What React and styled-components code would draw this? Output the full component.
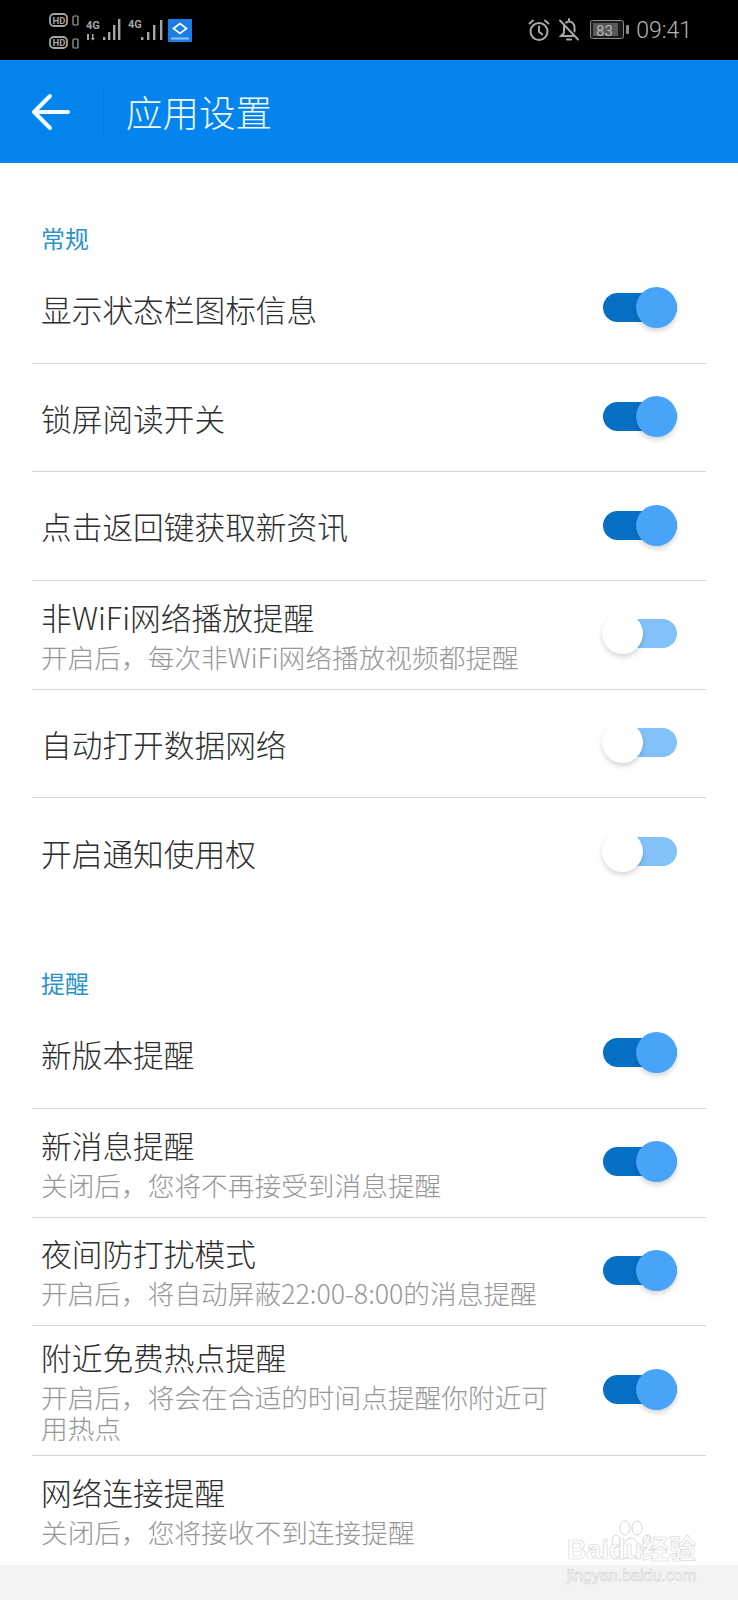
import React from "react";
import styled, { createGlobalStyle } from "styled-components";

const GlobalStyle = createGlobalStyle`
  html, body {
    margin: 0;
    padding: 0;
    background: #f3f3f3;
  }
  body {
    font-family: "Noto Sans CJK SC", "Noto Sans", sans-serif;
  }
`;

const Page = styled.div`
  position: relative;
  width: 738px;
  height: 1600px;
  overflow: hidden;
  background: #f3f3f3;
`;

const StatusBar = styled.div`
  height: 60px;
  background: #000;
  display: flex;
  align-items: center;
  justify-content: space-between;
  padding: 0 46px 0 49px;
  box-sizing: border-box;
  color: #a9a9a9;
`;

const StatusGroup = styled.div`
  display: flex;
  align-items: center;
`;

const Clock = styled.span`
  font-family: "Roboto", sans-serif;
  font-size: 23px;
  font-weight: 300;
  color: #b4b4b4;
  margin-left: 4px;
`;

const AppBar = styled.div`
  height: 103px;
  background: #0484ee;
  display: flex;
  align-items: center;
  padding-left: 31px;
  box-sizing: border-box;
`;

const BackButton = styled.button`
  display: flex;
  padding: 0;
  border: 0;
  background: none;
`;

const AppBarDivider = styled.div`
  width: 1px;
  height: 44px;
  background: #0b75ce;
  margin: 0 22px 0 32px;
`;

const AppBarTitle = styled.h1`
  margin: 0;
  font-size: 36.5px;
  font-weight: 300;
  color: #f2faff;
`;

const Content = styled.div`
  background: #fff;
  height: 1402px;
  overflow: hidden;
`;

const Section = styled.section`
  padding-top: ${(p) => p.$top}px;
`;

const SectionLabel = styled.div`
  font-size: 24px;
  line-height: 30px;
  color: #2b93c9;
  padding-left: 41px;
  margin-bottom: ${(p) => p.$gap}px;
`;

const Row = styled.div`
  height: ${(p) => p.$height || 108.7}px;
  margin: 0 32px;
  padding: 0 29px 2px 9px;
  display: flex;
  align-items: center;
  justify-content: space-between;
  box-sizing: border-box;
  border-bottom: ${(p) => (p.$last ? "none" : "1px solid #d6d6d6")};
`;

const RowText = styled.div`
  width: 510px;
  margin-top: 2px;
  display: flex;
  flex-direction: column;
`;

const RowTitle = styled.div`
  font-size: 30.7px;
  line-height: 38px;
  color: #2e2e2e;
  font-weight: 300;
`;

const RowHint = styled.div`
  font-size: 26.7px;
  line-height: 31px;
  margin-top: 5px;
  color: #979797;
  font-weight: 300;
`;

const Toggle = styled.div`
  position: relative;
  flex: none;
  width: 74px;
  height: 29px;
  border-radius: 15px;
  background: ${(p) => (p.$on ? "#0670c4" : "#82c2f8")};
`;

const Knob = styled.span`
  position: absolute;
  top: -6px;
  ${(p) => (p.$on ? "right: 0;" : "left: -1px;")}
  width: 41px;
  height: 41px;
  border-radius: 50%;
  background: ${(p) => (p.$on ? "#48a4f8" : "#fff")};
  box-shadow: 0 3px 5px rgba(0, 0, 0, 0.16);
`;

const Footer = styled.div`
  height: 35px;
  background: #f3f3f3;
`;

const Watermark = styled.div`
  position: absolute;
  left: 567px;
  top: 1536px;
  width: 132px;
  color: #fff;
  -webkit-text-stroke: 0.6px #d2d2d2;
`;

const WatermarkBrand = styled.div`
  position: relative;
  z-index: 1;
  font-family: "Liberation Sans", "Noto Sans CJK SC", sans-serif;
  font-size: 27px;
  font-weight: 700;
  line-height: 28px;
  white-space: nowrap;
`;

const WatermarkUrl = styled.div`
  font-family: "Liberation Sans", sans-serif;
  font-size: 16px;
  line-height: 18px;
  margin-top: 3px;
  white-space: nowrap;
`;

const PawMark = styled.svg`
  position: absolute;
  left: 44px;
  top: -16px;
`;

const general = [
  { title: "显示状态栏图标信息", on: true },
  { title: "锁屏阅读开关", on: true },
  { title: "点击返回键获取新资讯", on: true },
  { title: "非WiFi网络播放提醒", hint: "开启后，每次非WiFi网络播放视频都提醒", on: false },
  { title: "自动打开数据网络", on: false },
  { title: "开启通知使用权", on: false, last: true },
];

const alerts = [
  { title: "新版本提醒", on: true },
  { title: "新消息提醒", hint: "关闭后，您将不再接受到消息提醒", on: true },
  { title: "夜间防打扰模式", hint: "开启后，将自动屏蔽22:00-8:00的消息提醒", on: true },
  { title: "附近免费热点提醒", hint: "开启后，将会在合适的时间点提醒你附近可用热点", on: true, height: 129.6 },
  { title: "网络连接提醒", hint: "关闭后，您将接收不到连接提醒", on: null, last: true },
];

const SignalIcons = () => (
  <svg width="146" height="40" viewBox="0 0 146 40" fill="none">
    <g stroke="#a5a5a5" strokeWidth="1.8">
      <rect x="1" y="4" width="17" height="12" rx="4" />
      <rect x="1" y="27" width="17" height="11" rx="4" />
      <rect x="24" y="6" width="5" height="9" rx="1" strokeWidth="1.2" />
      <rect x="24" y="29" width="5" height="9" rx="1" strokeWidth="1.2" />
    </g>
    <g fill="#a5a5a5" fontFamily="Roboto, sans-serif" fontWeight="700">
      <text x="3.5" y="13.5" fontSize="9.5">HD</text>
      <text x="3.5" y="36" fontSize="9.5">HD</text>
      <text x="37" y="19" fontSize="11">4G</text>
      <text x="79" y="18" fontSize="11">4G</text>
    </g>
    <g fill="#a5a5a5">
      <path d="M38 24h2v6h-2zM43 24h1.500v4h1.500l-2.200 2.500-2.200-2.500h1.400z" />
      <path d="M54 27h2.400v3H54zM59 22h2.400v8H59zM64 15h2.400v15H64zM69 9h2.400v21H69z" />
      <path d="M92 27h2.400v3H92zM98 22h2.400v8H98zM104 15h2.400v15H104zM111 10h2.400v20H111z" />
    </g>
    <rect x="119" y="9" width="24" height="23" rx="1" fill="#1a7ee6" />
    <path d="M124.500 18.500l6.500-5 6.500 5-6.500 5z" fill="none" stroke="#fff" strokeWidth="1.7" />
    <rect x="122" y="27.500" width="18" height="2" fill="#8ec4f5" />
  </svg>
);

const AlarmIcon = () => (
  <svg width="24" height="24" viewBox="0 0 24 24" fill="none" stroke="#a8a8a8" strokeWidth="2" strokeLinecap="round">
    <circle cx="12" cy="13.5" r="8.5" />
    <path d="M12 8.500v5.200l3.200 2.600M2.500 5.500L6 2.500M21.500 5.500L18 2.500" />
  </svg>
);

const MuteIcon = () => (
  <svg width="24" height="24" viewBox="0 0 24 24" fill="none" stroke="#a8a8a8" strokeWidth="2" strokeLinecap="round" style={{ marginLeft: 6 }}>
    <path d="M7 8.500V15l-3 3h12M9 4.700C10 4 11 3.400 12 3.400c3 0 5.500 2.600 5.500 6v4.200M12 1v2M10 21.500h4M3 2.500l18 19" />
  </svg>
);

const BatteryIcon = () => (
  <svg width="42" height="20" viewBox="0 0 42 20" style={{ marginLeft: 9 }}>
    <rect x="0.5" y="0.5" width="33" height="18" rx="2" fill="#1b1b1b" stroke="#8d8d8d" />
    <rect x="3" y="3" width="25" height="13" fill="#585858" />
    <text x="6" y="15.500" fontSize="15" fontFamily="Roboto, sans-serif" fill="#b5b5b5">83</text>
    <rect x="36" y="5" width="3" height="9" rx="1" fill="#8d8d8d" />
  </svg>
);

const BackArrow = () => (
  <svg width="40" height="40" viewBox="0 0 40 40" fill="none" stroke="#f4fbff" strokeWidth="4" strokeLinecap="round" strokeLinejoin="round">
    <path d="M3 20h34M19 4L3 20l16 16" />
  </svg>
);

const Paw = () => (
  <PawMark width="40" height="44" viewBox="0 0 40 44" fill="#fff" stroke="#d6d6d6" strokeWidth="1">
    <ellipse cx="5" cy="21" rx="4" ry="6" />
    <ellipse cx="14" cy="8" rx="5" ry="7" />
    <ellipse cx="26" cy="8" rx="5" ry="7" />
    <ellipse cx="36" cy="21" rx="4" ry="6" />
    <path d="M20 18c-5 0-6 6-10 9-4 4-1 11 4 11 3 0 4-1 6-1s3 1 6 1c5 0 8-7 4-11-4-3-5-9-10-9z" />
  </PawMark>
);

const SettingRow = ({ item }) => (
  <Row $last={item.last} $height={item.height}>
    <RowText>
      <RowTitle>{item.title}</RowTitle>
      {item.hint && <RowHint>{item.hint}</RowHint>}
    </RowText>
    {item.on !== null && (
      <Toggle $on={item.on}>
        <Knob $on={item.on} />
      </Toggle>
    )}
  </Row>
);

export default function App() {
  return (
    <Page>
      <GlobalStyle />
      <StatusBar>
        <StatusGroup>
          <SignalIcons />
        </StatusGroup>
        <StatusGroup>
          <AlarmIcon />
          <MuteIcon />
          <BatteryIcon />
          <Clock>09:41</Clock>
        </StatusGroup>
      </StatusBar>
      <AppBar>
        <BackButton>
          <BackArrow />
        </BackButton>
        <AppBarDivider />
        <AppBarTitle>应用设置</AppBarTitle>
      </AppBar>
      <Content>
        <Section $top={60}>
          <SectionLabel $gap={2}>常规</SectionLabel>
          {general.map((item) => (
            <SettingRow key={item.title} item={item} />
          ))}
        </Section>
        <Section $top={61}>
          <SectionLabel $gap={2}>提醒</SectionLabel>
          {alerts.map((item) => (
            <SettingRow key={item.title} item={item} />
          ))}
        </Section>
      </Content>
      <Footer />
      <Watermark>
        <Paw />
        <WatermarkBrand>Baidu经验</WatermarkBrand>
        <WatermarkUrl>jingyan.baidu.com</WatermarkUrl>
      </Watermark>
    </Page>
  );
}
